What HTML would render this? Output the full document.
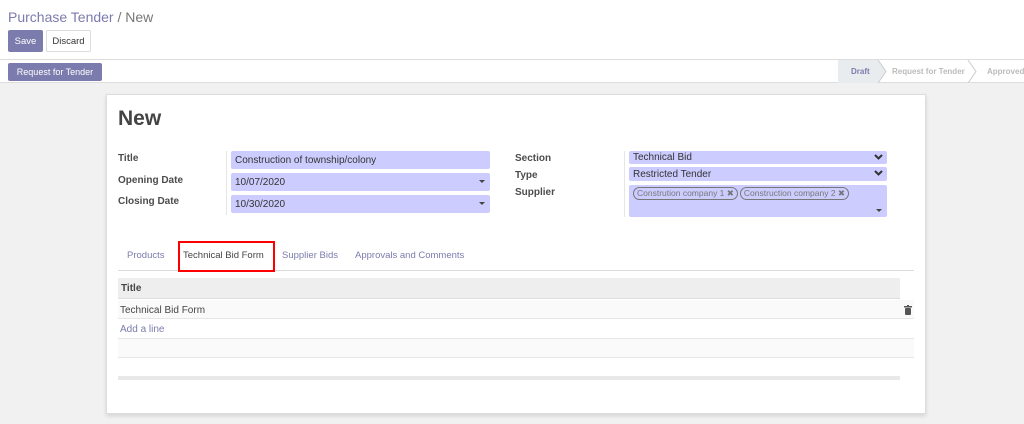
<!DOCTYPE html>
<html><head><style>
*{margin:0;padding:0;box-sizing:border-box}
body{width:1024px;height:424px;background:#f1f1f1;font-family:"Liberation Sans",sans-serif;position:relative;overflow:hidden;color:#4c4c4c}
.a{position:absolute}
.hdr{left:0;top:0;width:1024px;height:83px;background:#fff;border-bottom:1px solid #ddd}
.btn{position:absolute;font-size:9.5px;display:flex;align-items:center;justify-content:center;border-radius:2px}
.lbl{position:absolute;font-size:10px;font-weight:bold;color:#4c4c4c}
.inp{position:absolute;background:#ccccff;border-radius:2px;font-size:10px;color:#333;padding-left:4px;display:flex;align-items:center}
.car{position:absolute;right:5px;top:7px;border-left:3px solid transparent;border-right:3px solid transparent;border-top:3px solid #444}
.chev{position:absolute;right:4px;top:3px}
.tag{display:inline-block;border:1px solid #777;border-radius:8px;font-size:8.5px;color:#777;padding:0 3px;height:13px;line-height:11px;margin-right:2px}
.tab{position:absolute;top:250px;font-size:9.5px;color:#7c7bad}
</style></head><body>
<div class="a hdr"></div>
<div class="a" style="left:0;top:59px;width:1024px;height:1px;background:#ddd"></div>
<div class="a" style="left:8px;top:9px;font-size:14px;color:#7c7bad">Purchase Tender <span style="color:#777">/ New</span></div>
<div class="btn" style="left:8px;top:30px;width:35px;height:22px;background:#7c7bad;color:#fff">Save</div>
<div class="btn" style="left:46px;top:30px;width:45px;height:22px;background:#fff;border:1px solid #ddd;color:#333">Discard</div>
<div class="btn" style="left:8px;top:63px;width:94px;height:18px;background:#7c7bad;color:#fff;font-size:9px">Request for Tender</div>
<div class="a" style="left:838px;top:60px;width:40px;height:23px;background:#e9ecef"></div>
<svg class="a" style="left:870px;top:60px" width="120" height="23"><polygon points="0,0 8,0 16,11.5 8,23 0,23" fill="#e9ecef"/><polyline points="8,0 16,11.5 8,23" fill="none" stroke="#ccc"/><polyline points="98,0 106,11.5 98,23" fill="none" stroke="#ccc"/></svg>
<div class="a" style="left:851px;top:67px;font-size:8px;font-weight:bold;color:#7c7bad">Draft</div>
<div class="a" style="left:892px;top:67px;font-size:8px;font-weight:bold;color:#bbb">Request for Tender</div>
<div class="a" style="left:987px;top:67px;font-size:8px;font-weight:bold;color:#bbb">Approved</div>

<div class="a" style="left:106px;top:94px;width:820px;height:320px;background:#fff;border:1px solid #ddd;box-shadow:0 2px 4px rgba(0,0,0,.12)"></div>
<div class="a" style="left:118px;top:107px;font-size:21px;font-weight:bold;color:#444">New</div>
<div class="lbl" style="left:118px;top:153px">Title</div>
<div class="lbl" style="left:118px;top:175px">Opening Date</div>
<div class="lbl" style="left:118px;top:196px">Closing Date</div>
<div class="a" style="left:226px;top:151px;width:1px;height:64px;background:#e6e6e6"></div>
<div class="inp" style="left:231px;top:151px;width:259px;height:18px">Construction of township/colony</div>
<div class="inp" style="left:231px;top:173px;width:259px;height:18px">10/07/2020<span class="car"></span></div>
<div class="inp" style="left:231px;top:195px;width:259px;height:18px">10/30/2020<span class="car"></span></div>
<div class="lbl" style="left:515px;top:153px">Section</div>
<div class="lbl" style="left:515px;top:170px">Type</div>
<div class="lbl" style="left:515px;top:187px">Supplier</div>
<div class="a" style="left:624px;top:151px;width:1px;height:66px;background:#e6e6e6"></div>
<div class="inp" style="left:629px;top:151px;width:258px;height:13px">Technical Bid<svg class="chev" width="9" height="6"><polyline points="1,1 4.5,4.5 8,1" fill="none" stroke="#333" stroke-width="2"/></svg></div>
<div class="inp" style="left:629px;top:167px;width:258px;height:14px">Restricted Tender<svg class="chev" width="9" height="6"><polyline points="1,1 4.5,4.5 8,1" fill="none" stroke="#333" stroke-width="2"/></svg></div>
<div class="inp" style="left:629px;top:185px;width:258px;height:32px;align-items:flex-start;padding-top:2px"><span class="tag">Constrution company 1 ✖</span><span class="tag">Construction company 2 ✖</span><span class="car" style="top:24px"></span></div>

<div class="a" style="left:118px;top:270px;width:796px;height:1px;background:#ddd"></div>
<div class="tab" style="left:127px">Products</div>
<div class="a" style="left:178px;top:241px;width:97px;height:31px;border:2px solid #f00;background:#fff"></div>
<div class="tab" style="left:183px;color:#444">Technical Bid Form</div>
<div class="tab" style="left:282px">Supplier Bids</div>
<div class="tab" style="left:355px">Approvals and Comments</div>

<div class="a" style="left:118px;top:278px;width:782px;height:21px;background:#eee;border-bottom:1px solid #ddd"></div>
<div class="a" style="left:121px;top:283px;font-size:10px;font-weight:bold;color:#444">Title</div>
<div class="a" style="left:118px;top:300px;width:796px;height:19px;background:#fafafa;border-bottom:1px solid #e6e6e6"></div>
<div class="a" style="left:120px;top:305px;font-size:10px;color:#444">Technical Bid Form</div>
<svg class="a" style="left:904px;top:305px" width="8" height="10"><rect x="0" y="1" width="8" height="1.5" fill="#555"/><rect x="3" y="0" width="2" height="1" fill="#555"/><rect x="1" y="3" width="6" height="7" rx="1" fill="#555"/></svg>
<div class="a" style="left:120px;top:324px;font-size:10px;color:#7c7bad">Add a line</div>
<div class="a" style="left:118px;top:338px;width:796px;height:20px;background:#fafafa;border-top:1px solid #e6e6e6;border-bottom:1px solid #e6e6e6"></div>
<div class="a" style="left:118px;top:376px;width:782px;height:4px;background:#e8e8e8"></div>
</body></html>
